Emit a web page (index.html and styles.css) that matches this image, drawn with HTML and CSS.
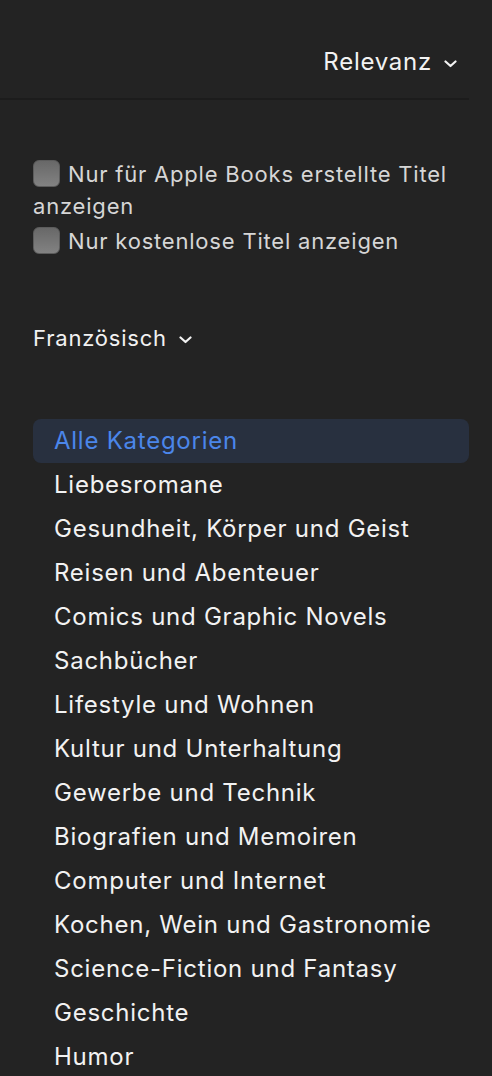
FILE: index.html
```html
<!DOCTYPE html>
<html lang="de">
<head>
<meta charset="utf-8">
<link rel="stylesheet" href="styles.css">
</head>
<body>
<div class="page">
  <header class="topbar">
    <button class="sort">Relevanz
      <svg class="chev" width="13" height="8" viewBox="0 0 13 8"><path d="M1.5 1.5 L6.5 6 L11.5 1.5" fill="none" stroke="currentColor" stroke-width="2.2" stroke-linecap="round" stroke-linejoin="round"/></svg>
    </button>
  </header>
  <section class="filters">
    <label class="check"><span class="box"></span>Nur für Apple Books erstellte Titel anzeigen</label>
    <label class="check"><span class="box"></span>Nur kostenlose Titel anzeigen</label>
  </section>
  <section class="lang">
    <button class="langbtn">Französisch
      <svg class="chev" width="13" height="8" viewBox="0 0 13 8"><path d="M1.5 1.5 L6.5 6 L11.5 1.5" fill="none" stroke="currentColor" stroke-width="2.2" stroke-linecap="round" stroke-linejoin="round"/></svg>
    </button>
  </section>
  <ul class="cats">
    <li class="active">Alle Kategorien</li>
    <li>Liebesromane</li>
    <li>Gesundheit, Körper und Geist</li>
    <li>Reisen und Abenteuer</li>
    <li>Comics und Graphic Novels</li>
    <li>Sachbücher</li>
    <li>Lifestyle und Wohnen</li>
    <li>Kultur und Unterhaltung</li>
    <li>Gewerbe und Technik</li>
    <li>Biografien und Memoiren</li>
    <li>Computer und Internet</li>
    <li>Kochen, Wein und Gastronomie</li>
    <li>Science-Fiction und Fantasy</li>
    <li>Geschichte</li>
    <li>Humor</li>
  </ul>
</div>
</body>
</html>
```
FILE: styles.css
```css
html, body {
  margin: 0;
  padding: 0;
  background: #232323;
}
body {
  font-family: Inter, "Noto Sans", sans-serif;
  color: #f2f2f2;
  overflow: hidden;
}
.page {
  width: 469px;
  height: 1076px;
  overflow: hidden;
}
.topbar {
  height: 100px;
  border-bottom: 2px solid #1c1c1c;
  display: flex;
  justify-content: flex-end;
  align-items: flex-start;
  padding-right: 12px;
  box-sizing: border-box;
}
button {
  background: none;
  border: 0;
  padding: 0;
  font: inherit;
  color: inherit;
  display: flex;
  align-items: center;
  gap: 12px;
  cursor: pointer;
}
.sort {
  margin-top: 47px;
  font-size: 24px;
  letter-spacing: 0.75px;
  line-height: 30px;
}
.chev {
  margin-top: 3px;
}
.filters {
  padding: 58px 0 0 33px;
  font-size: 22px;
  letter-spacing: 0.8px;
  color: #d6d6d6;
}
.check {
  display: block;
  line-height: 32px;
  margin-bottom: 3px;
}
.box {
  display: inline-block;
  width: 27px;
  height: 27px;
  box-sizing: border-box;
  border-radius: 6px;
  background: linear-gradient(#686868, #828282);
  border: 1px solid #5c5c5c;
  vertical-align: -5px;
  margin-right: 8px;
}
.lang {
  padding: 63px 0 0 33px;
}
.langbtn {
  font-size: 22px;
  letter-spacing: 0.8px;
  line-height: 30px;
}
.cats {
  list-style: none;
  margin: 66px 0 0 33px;
  padding: 0;
  font-size: 24px;
  letter-spacing: 0.75px;
}
.cats li {
  height: 44px;
  line-height: 44px;
  padding-left: 21px;
  border-radius: 8px;
  white-space: nowrap;
}
.cats li.active {
  background: #28303f;
  color: #4b86ea;
}
```
